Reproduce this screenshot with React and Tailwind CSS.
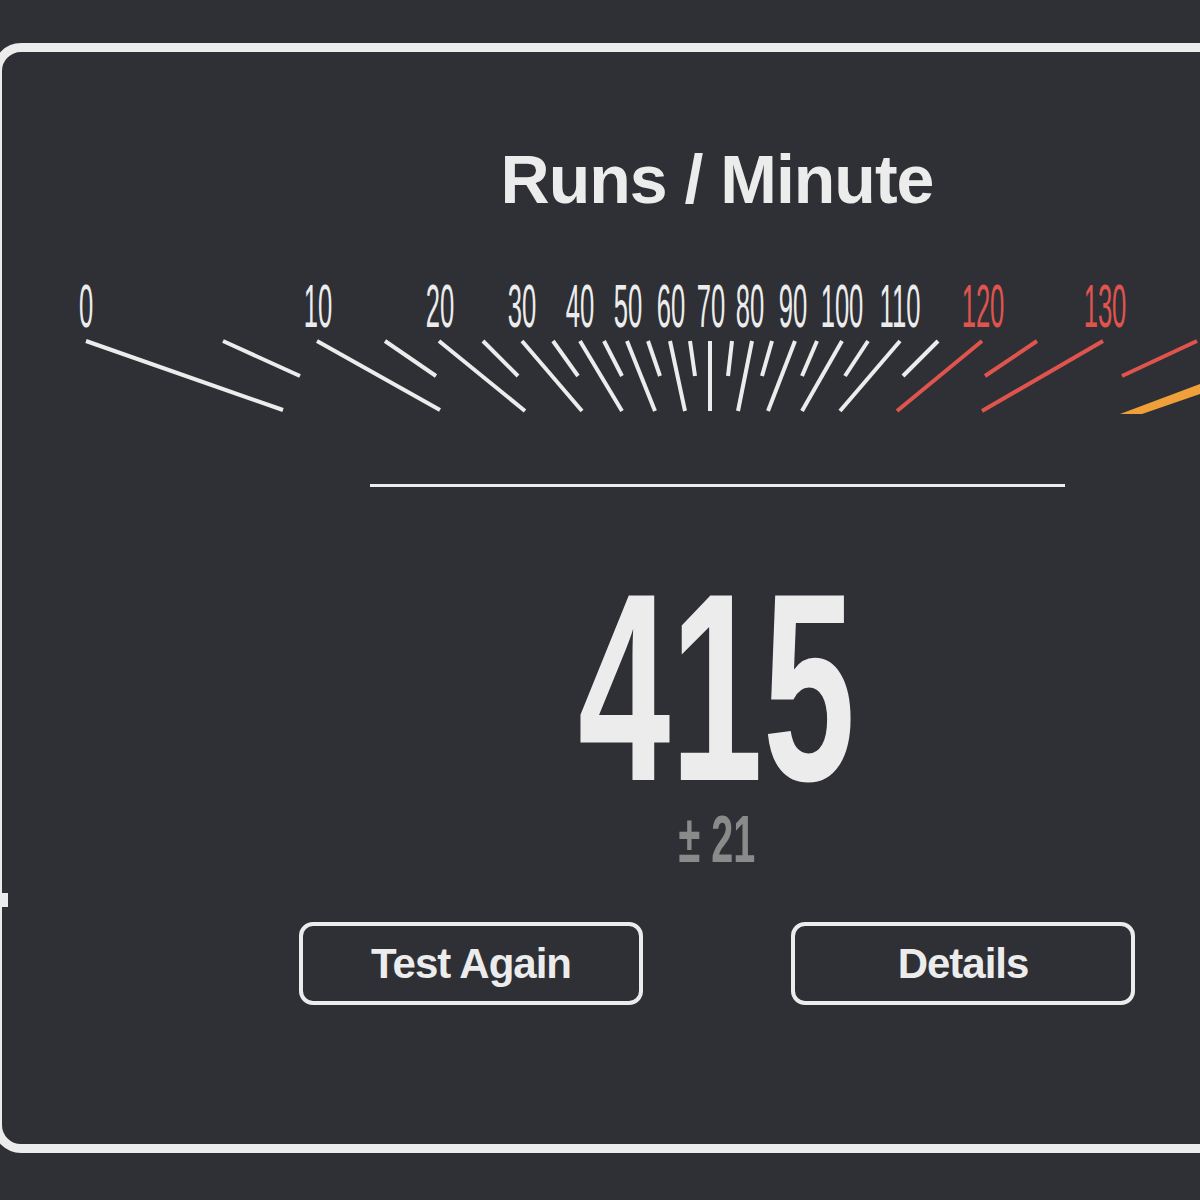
const RED = '#e0544e'
const WHITE = '#ececec'

const LABELS = [
  { v: '0', x: 86 },
  { v: '10', x: 318 },
  { v: '20', x: 440 },
  { v: '30', x: 522 },
  { v: '40', x: 580 },
  { v: '50', x: 628 },
  { v: '60', x: 671 },
  { v: '70', x: 711 },
  { v: '80', x: 750 },
  { v: '90', x: 793 },
  { v: '100', x: 842 },
  { v: '110', x: 900 },
  { v: '120', x: 983, red: true },
  { v: '130', x: 1105, red: true },
]

// [x1, y1, x2, y2, red]
const TICKS = [
  [86, 341, 283, 410],
  [223, 341, 300, 376],
  [317, 341, 440, 410],
  [385, 341, 436, 376],
  [439, 341, 525, 411],
  [483, 341, 518, 376],
  [522, 341, 582, 411],
  [553, 341, 578, 376],
  [580, 341, 622, 411],
  [604, 341, 622, 376],
  [627, 341, 655, 411],
  [648, 341, 660, 376],
  [670, 341, 685, 411],
  [690, 341, 695, 376],
  [710, 341, 710, 411],
  [732, 341, 728, 376],
  [752, 341, 738, 411],
  [772, 341, 762, 376],
  [795, 341, 768, 411],
  [817, 341, 802, 376],
  [842, 341, 802, 411],
  [868, 341, 845, 376],
  [900, 341, 840, 411],
  [938, 341, 903, 376],
  [982, 341, 897, 411, true],
  [1037, 341, 985, 376, true],
  [1103, 341, 982, 411, true],
  [1197, 341, 1122, 376, true],
]

function Gauge() {
  return (
    <svg width="1200" height="150" viewBox="0 270 1200 150" className="block">
      {LABELS.map((l) => (
        <text
          key={l.v}
          transform={`translate(${l.x},327) scale(0.42,1)`}
          x="0"
          y="0"
          textAnchor="middle"
          fontSize="61"
          fontFamily="'Liberation Sans', Arial, sans-serif"
          fill={l.red ? RED : WHITE}
        >
          {l.v}
        </text>
      ))}
      {TICKS.map(([x1, y1, x2, y2, red], i) => (
        <line key={i} x1={x1} y1={y1} x2={x2} y2={y2} stroke={red ? RED : WHITE} strokeWidth="4" />
      ))}
      <polygon points="1120,414 1200,384 1200,394 1142,414" fill="#f0a03a" />
    </svg>
  )
}

function Button({ children }) {
  return (
    <button className="w-[344px] h-[83px] rounded-[14px] border-[4px] border-[#ececec] flex items-center justify-center text-[42px] font-bold tracking-[-1px] text-[#ececec] leading-none">
      {children}
    </button>
  )
}

export default function App() {
  return (
    <div
      className="relative w-[1200px] h-[1200px] overflow-hidden bg-[#2e3035] pt-[43px]"
      style={{ fontFamily: "'Liberation Sans', Arial, sans-serif" }}
    >
      <div className="-ml-[7px] w-[1300px] h-[1110px] rounded-[28px] border-[9px] border-[#ececec]">
        <div className="w-[1430px] flex flex-col items-center">
          <h1 className="mt-[93px] text-[68px] leading-[68px] font-bold tracking-[-1px] text-[#ececec]">
            Runs / Minute
          </h1>
          <div className="mt-[57px] self-start -ml-[2px]">
            <Gauge />
          </div>
          <div className="mt-[64px] w-[695px] h-[3px] bg-[#ececec]" />
          <div className="mt-[100px] h-[200px] leading-[200px] text-[268px] font-bold text-[#ececec] scale-x-[0.62]">
            415
          </div>
          <div className="mt-[19px] h-[66px] leading-[66px] text-[66px] font-bold text-[#8a8a8a] scale-x-[0.6] whitespace-pre">
            ± 21
          </div>
          <div className="mt-[50px] flex gap-[148px]">
            <Button>Test Again</Button>
            <Button>Details</Button>
          </div>
        </div>
      </div>
      <div className="absolute left-0 top-[893px] w-[8px] h-[14px] bg-[#ececec]" />
    </div>
  )
}
